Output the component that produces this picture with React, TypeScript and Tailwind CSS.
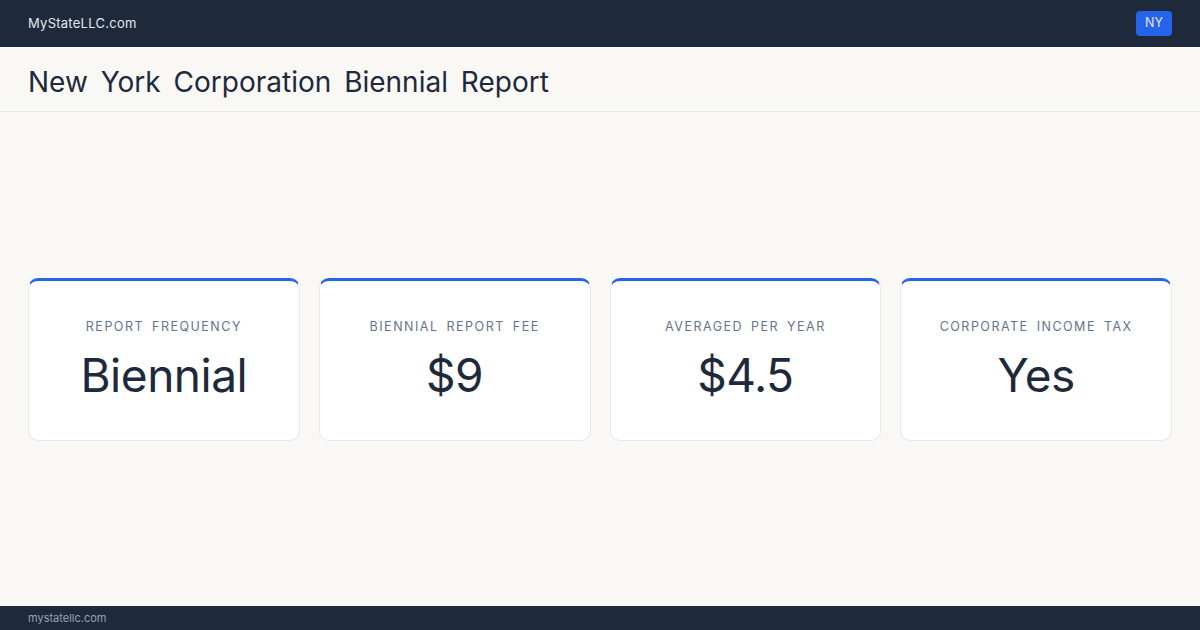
const stats = [
  { label: 'Report Frequency', value: 'Biennial' },
  { label: 'Biennial Report Fee', value: '$9' },
  { label: 'Averaged Per Year', value: '$4.5' },
  { label: 'Corporate Income Tax', value: 'Yes' },
];

function StatCard({ label, value }: { label: string; value: string }) {
  return (
    <div className="flex h-[163px] flex-col items-center rounded-[10px] border border-[#e2e8f0] border-t-[3px] border-t-[#2563eb] bg-white pt-[36px]">
      <p className="text-[12.5px] leading-[19px] uppercase tracking-[0.12em] [word-spacing:3px] text-[#64748b]">{label}</p>
      <p className="mt-[14px] text-[46px] leading-[50px] tracking-[-0.01em] text-[#1e293b]">{value}</p>
    </div>
  );
}

export default function App() {
  return (
    <div className="flex h-[630px] w-[1200px] flex-col bg-[#faf8f5] font-['Inter',sans-serif]">
      <header className="flex h-[47px] shrink-0 items-center justify-between bg-[#1e293b] px-7">
        <span className="text-[13px] tracking-[0.02em] text-[#e2e8f0]">MyStateLLC.com</span>
        <span className="rounded-[4px] bg-[#2563eb] px-[9px] py-[3px] text-[12.5px] text-[#e0e7ff]">NY</span>
      </header>

      <div className="flex h-[65px] shrink-0 items-center border-b border-[#e2e8f0] px-7">
        <h1 className="mt-[6px] text-[28px] font-normal text-[#1e293b] [word-spacing:5px]">New York Corporation Biennial Report</h1>
      </div>

      <main className="flex flex-1 items-center px-7">
        <div className="grid w-full grid-cols-4 gap-[19px]">
          {stats.map((s) => (
            <StatCard key={s.label} label={s.label} value={s.value} />
          ))}
        </div>
      </main>

      <footer className="flex h-6 shrink-0 items-center bg-[#1e293b] px-7">
        <span className="text-[11px] text-[#94a3b8]">mystatellc.com</span>
      </footer>
    </div>
  );
}
